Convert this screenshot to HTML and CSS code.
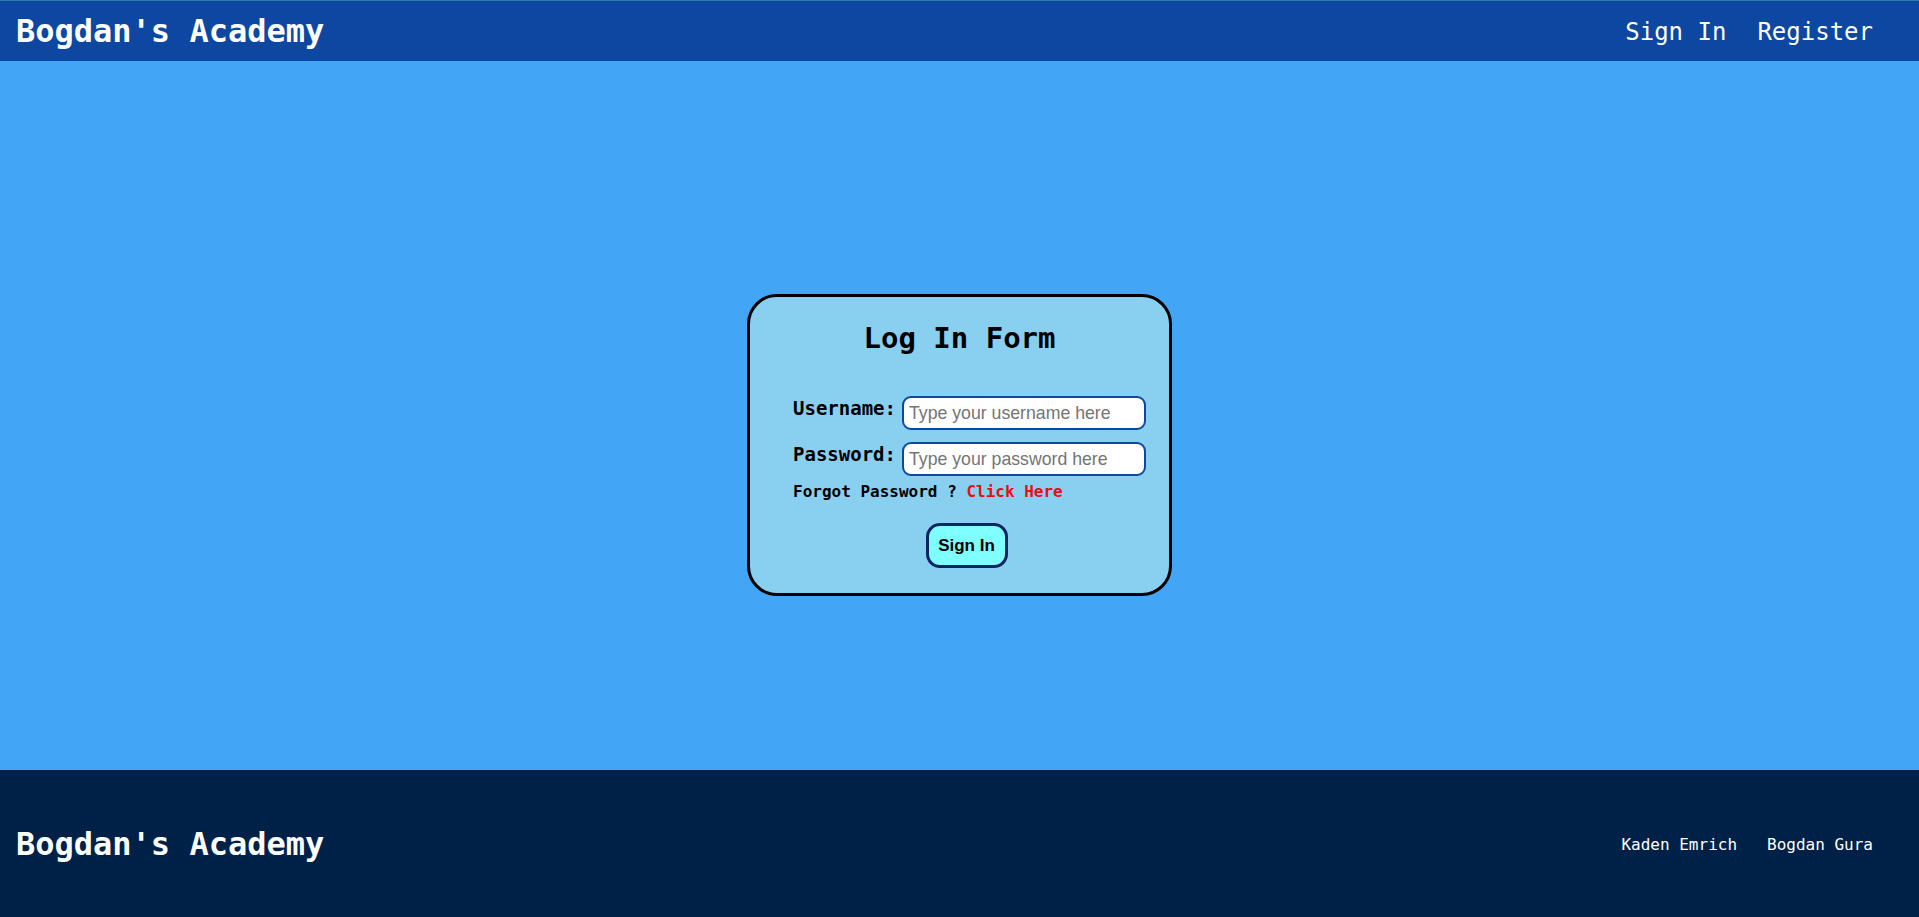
FILE: index.html
```html
<!DOCTYPE html>
<html lang="en">
<head>
<meta charset="utf-8">
<title>Bogdan's Academy - Log In</title>
<link rel="stylesheet" href="styles.css">
</head>
<body>
<header class="site-header">
  <div class="brand">Bogdan's Academy</div>
  <nav class="top-nav">
    <a href="#" class="top-link">Sign In</a>
    <a href="#" class="top-link">Register</a>
  </nav>
</header>
<main class="main">
  <form class="login-card">
    <h2 class="card-title">Log In Form</h2>
    <div class="card-body">
      <div class="fields">
        <label class="field-label" for="username">Username:</label>
        <input class="field-input" id="username" type="text" placeholder="Type your username here">
        <label class="field-label" for="password">Password:</label>
        <input class="field-input" id="password" type="password" placeholder="Type your password here">
      </div>
      <p class="forgot">Forgot Password ? <a href="#" class="forgot-link">Click Here</a></p>
      <div class="actions">
        <button type="button" class="submit-btn">Sign In</button>
      </div>
    </div>
  </form>
</main>
<footer class="site-footer">
  <div class="brand">Bogdan's Academy</div>
  <nav class="footer-nav">
    <span class="footer-link">Kaden Emrich</span>
    <span class="footer-link">Bogdan Gura</span>
  </nav>
</footer>
</body>
</html>
```
FILE: styles.css
```css
* {
  box-sizing: border-box;
}

html, body {
  margin: 0;
  padding: 0;
}

body {
  font-family: "DejaVu Sans Mono", monospace;
  background: #42a5f5;
  display: flex;
  flex-direction: column;
  height: 917px;
  overflow: hidden;
}

.site-header {
  height: 61px;
  flex: none;
  background: #0d47a1;
  border-top: 1px solid #2f7ba3;
  display: flex;
  align-items: center;
  justify-content: space-between;
  padding: 0 46px 0 16px;
}

.brand {
  color: #ffffff;
  font-size: 32px;
  font-weight: bold;
  line-height: 1;
}

.top-nav {
  display: flex;
  gap: 31px;
  padding-top: 1px;
}

.top-link {
  color: #ffffff;
  text-decoration: none;
  font-size: 24px;
}

.main {
  height: 709px;
  flex: none;
  display: flex;
  justify-content: center;
  align-items: flex-start;
  padding-top: 233px;
}

.login-card {
  width: 425px;
  height: 302px;
  background: #89cff0;
  border: 3px solid #000000;
  border-radius: 30px;
  padding: 25px 0 0 43px;
  margin: 0;
}

.card-title {
  margin: 0 0 0 -43px;
  font-size: 29px;
  font-weight: bold;
  line-height: 33px;
  text-align: center;
  color: #000000;
}

.card-body {
  width: 353px;
  margin-top: 41px;
}

.fields {
  display: grid;
  grid-template-columns: auto 244px;
  column-gap: 6px;
  row-gap: 12px;
  align-items: start;
}

.field-label {
  font-size: 19px;
  font-weight: bold;
  margin-top: 1px;
  color: #000000;
}

.field-input {
  width: 244px;
  height: 34px;
  border: 2px solid #0d47a1;
  border-radius: 9px;
  background: #ffffff;
  padding: 0 5px;
  font-family: "Liberation Sans", Arial, sans-serif;
  font-size: 17.7px;
  color: #000000;
  outline: none;
}

.field-input::placeholder {
  color: #757575;
}

.forgot {
  margin: 6px 0 0 0;
  font-size: 16px;
  font-weight: bold;
  color: #000000;
}

.forgot-link {
  color: #ee0a14;
  text-decoration: none;
}

.actions {
  display: flex;
  justify-content: center;
  padding-right: 6px;
  margin-top: 22px;
}

.submit-btn {
  width: 82px;
  height: 45px;
  background: #80ffff;
  border: 3px solid #0a2466;
  border-radius: 14px;
  font-family: "Liberation Sans", Arial, sans-serif;
  font-size: 17px;
  font-weight: bold;
  color: #000000;
  padding: 0;
  cursor: pointer;
}

.site-footer {
  height: 147px;
  flex: none;
  background: #002147;
  display: flex;
  align-items: center;
  justify-content: space-between;
  padding: 0 46px 0 16px;
}

.footer-nav {
  display: flex;
  gap: 30px;
  padding-top: 2px;
}

.footer-link {
  color: #ffffff;
  font-size: 16px;
}
```
